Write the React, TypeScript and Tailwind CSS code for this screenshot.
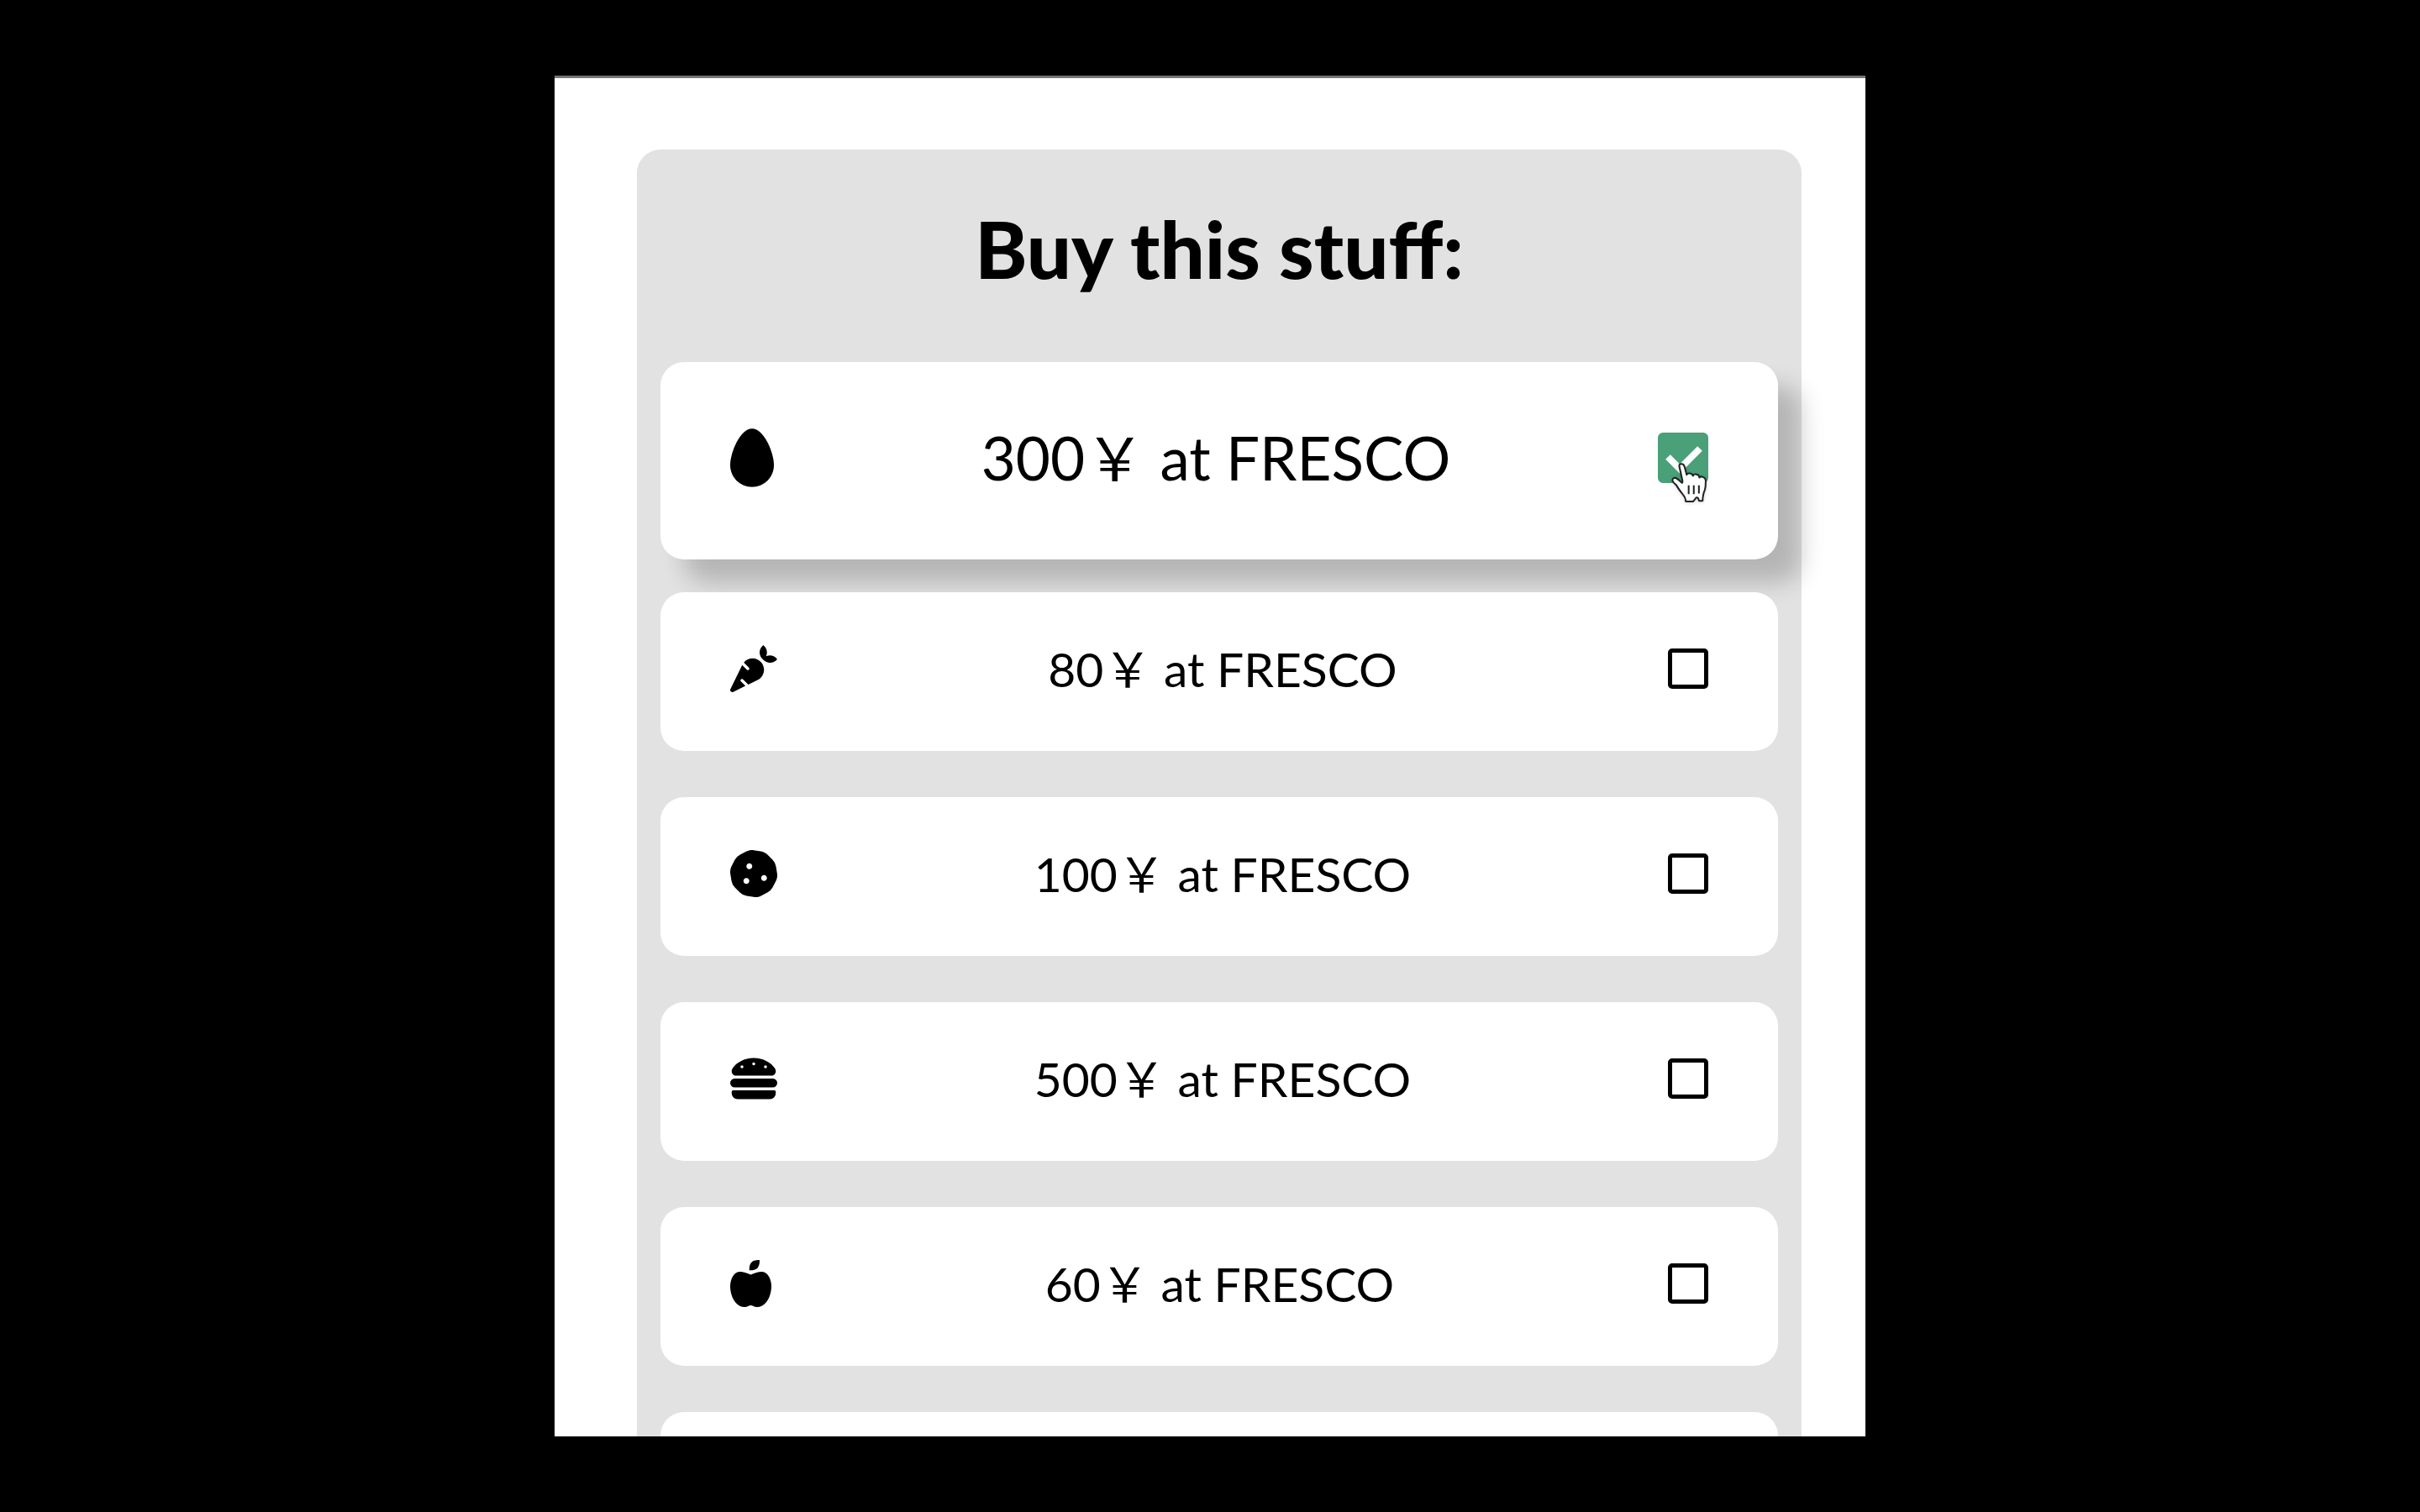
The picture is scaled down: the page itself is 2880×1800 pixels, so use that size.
import type { IconType } from "react-icons";
import { FaAppleAlt, FaCarrot, FaCookie, FaEgg, FaHamburger } from "react-icons/fa";

type Item = {
  id: string;
  icon: IconType;
  iconSize: string;
  price: number;
  shop: string;
  active?: boolean;
};

const items: Item[] = [
  { id: "egg", icon: FaEgg, iconSize: "h-[70px] w-[52px]", price: 300, shop: "FRESCO", active: true },
  { id: "carrot", icon: FaCarrot, iconSize: "size-14", price: 80, shop: "FRESCO" },
  { id: "cookie", icon: FaCookie, iconSize: "size-14", price: 100, shop: "FRESCO" },
  { id: "burger", icon: FaHamburger, iconSize: "size-14", price: 500, shop: "FRESCO" },
  { id: "apple", icon: FaAppleAlt, iconSize: "h-14 w-[49px]", price: 60, shop: "FRESCO" },
];

function PointerHand() {
  return (
    <svg
      viewBox="0 0 130 142"
      className="pointer-events-none absolute left-[15px] top-9 h-12 w-11 drop-shadow-sm"
      aria-hidden="true"
    >
      <path
        d="M31 12Q30 4 38 4Q46 4 49 12L57 42Q59 36 68 37Q77 38 79 46Q82 38 92 41Q101 43 102 52Q106 46 114 50Q125 54 124 66Q124 85 121 95Q114 110 113 134L101 134L97 124Q92 119 88 126L80 136L54 136Q52 120 44 112Q30 95 20 78Q7 68 7 60Q10 50 20 54Q28 58 40 70Q43 72 42 62Z"
        fill="#fff"
        stroke="#222"
        strokeWidth="6"
        strokeLinejoin="round"
      />
      <path d="M64 79V110M82 79V110M100 79V108" stroke="#222" strokeWidth="6" />
    </svg>
  );
}

function Row({ item }: { item: Item }) {
  const Icon = item.icon;
  return (
    <li
      className={
        item.active
          ? "mb-[39px] rounded-[28px] bg-white px-[83px] pb-[71px] pt-16 text-[71px] leading-[100px] shadow-[28px_28px_28px_rgba(0,0,0,0.2)]"
          : "mb-[55px] rounded-[28px] bg-white px-[83px] pb-[58px] pt-[51px] text-[57px] leading-[80px]"
      }
    >
      <label htmlFor={item.id} className="flex cursor-pointer items-center justify-between">
        <Icon className={item.iconSize} aria-hidden="true" />
        <span>
          {item.price}￥ at {item.shop}
        </span>
        <span className="relative flex">
          <input
            id={item.id}
            type="checkbox"
            defaultChecked={item.active}
            className={
              item.active
                ? "peer size-[60px] cursor-pointer appearance-none rounded-md border-[6px] border-black checked:border-[#4aa078] checked:bg-[#4aa078]"
                : "peer size-12 cursor-pointer appearance-none rounded-[5px] border-[5px] border-black checked:border-[#4aa078] checked:bg-[#4aa078]"
            }
          />
          <svg
            viewBox="0 0 60 60"
            className="pointer-events-none absolute inset-0 hidden size-full peer-checked:block"
            aria-hidden="true"
          >
            <path d="M12 29L26 43L50 19" fill="none" stroke="#fff" strokeWidth="8" />
          </svg>
          {item.active && <PointerHand />}
        </span>
      </label>
    </li>
  );
}

export default function App() {
  return (
    <div className="flex h-screen justify-center overflow-hidden bg-black pb-[90px] pt-[90px] font-['Lato','Noto_Sans_CJK_JP',sans-serif] text-black">
      <main className="w-[54.2%] overflow-hidden border-t-[3px] border-[#777377] bg-white pl-[98px] pr-[76px] pt-[85px]">
        <section className="rounded-[28px] bg-[#e2e2e2] px-7 pb-7">
          <h1 className="pb-[65px] pt-12 text-center text-[94px] font-black leading-[140px]">
            Buy this stuff:
          </h1>
          <ul>
            {items.map((item) => (
              <Row key={item.id} item={item} />
            ))}
            <li className="h-[189px] rounded-[28px] bg-white" aria-hidden="true" />
          </ul>
        </section>
      </main>
    </div>
  );
}
